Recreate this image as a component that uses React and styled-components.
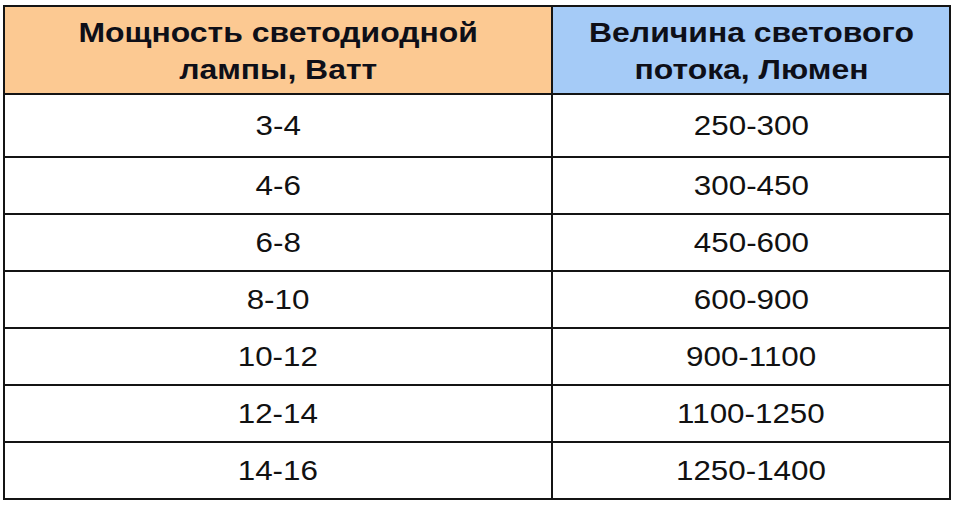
import React from "react";
import styled, { createGlobalStyle } from "styled-components";

const Global = createGlobalStyle`
  html, body { margin: 0; padding: 0; background: #ffffff; }
  body { font-family: "Liberation Sans", Arial, sans-serif; }
`;

const Page = styled.div`
  width: 960px;
  height: 506px;
  padding: 5px 0 0 3px;
  box-sizing: border-box;
  background: #ffffff;
`;

const Table = styled.div`
  display: grid;
  grid-template-columns: 548px 398px;
  border-left: 2px solid #141414;
  border-top: 2px solid #141414;
  width: max-content;
`;

const Cell = styled.div`
  box-sizing: border-box;
  height: ${(p) => p.$h}px;
  border-right: 2px solid #141414;
  border-bottom: 2px solid #141414;
  background: ${(p) => p.$bg || "#ffffff"};
  display: flex;
  align-items: center;
  justify-content: center;
  text-align: center;
  color: #111111;
`;

const HeadText = styled.span`
  display: inline-block;
  font-family: "Liberation Sans", Arial, sans-serif;
  font-weight: 700;
  font-size: 28px;
  line-height: 37px;
  color: #0e0f18;
  transform: scaleX(1.14);
  padding-top: 1px;
`;

const BodyText = styled.span`
  display: inline-block;
  font-family: "Liberation Sans", Arial, sans-serif;
  font-weight: 400;
  font-size: 28px;
  line-height: 32px;
  color: #111111;
  transform: scaleX(1.12);
`;

const rows = [
  ["3-4", "250-300"],
  ["4-6", "300-450"],
  ["6-8", "450-600"],
  ["8-10", "600-900"],
  ["10-12", "900-1100"],
  ["12-14", "1100-1250"],
  ["14-16", "1250-1400"],
];

export default function App() {
  return (
    <>
      <Global />
      <Page>
        <Table>
          <Cell $h={88} $bg="#fcc992">
            <HeadText>
              Мощность светодиодной
              <br />
              лампы, Ватт
            </HeadText>
          </Cell>
          <Cell $h={88} $bg="#a5cbf7">
            <HeadText>
              Величина светового
              <br />
              потока, Люмен
            </HeadText>
          </Cell>
          {rows.map(([w, lm], i) => (
            <React.Fragment key={w}>
              <Cell $h={i === 0 ? 63 : 57}>
                <BodyText>{w}</BodyText>
              </Cell>
              <Cell $h={i === 0 ? 63 : 57}>
                <BodyText>{lm}</BodyText>
              </Cell>
            </React.Fragment>
          ))}
        </Table>
      </Page>
    </>
  );
}
